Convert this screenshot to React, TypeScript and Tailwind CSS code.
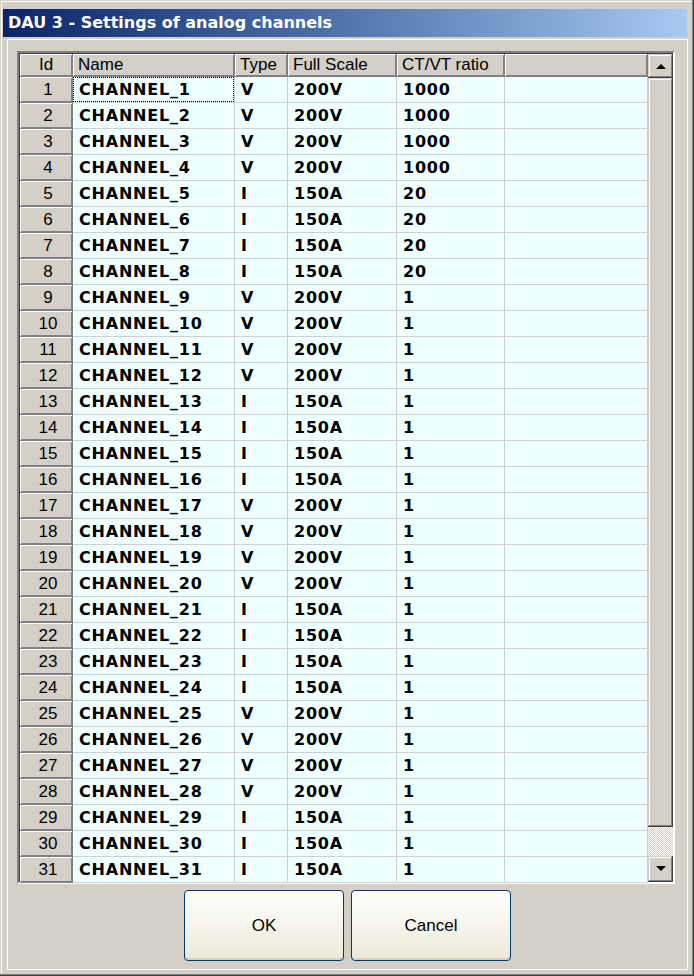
import React from "react";

interface Channel {
  id: number;
  name: string;
  type: string;
  scale: string;
  ratio: string;
}

const CHANNELS: Channel[] = Array.from({ length: 31 }, (_, i) => {
  const n = i + 1;
  const volt = Math.floor(i / 4) % 2 === 0;
  return {
    id: n,
    name: `CHANNEL_${n}`,
    type: volt ? "V" : "I",
    scale: volt ? "200V" : "150A",
    ratio: n <= 4 ? "1000" : n <= 8 ? "20" : "1",
  };
});

const RAISED = "shadow-[inset_1px_1px_0_#ffffff,inset_-1px_-1px_0_#808080]";
const BTN3D =
  "shadow-[inset_-1px_-1px_0_#404040,inset_1px_1px_0_#d4d0c8,inset_-2px_-2px_0_#808080,inset_2px_2px_0_#ffffff]";

function Arrow({ up }: { up?: boolean }) {
  return (
    <svg width="10" height="6" viewBox="0 0 10 6">
      <path d={up ? "M0 6 L5 1 L10 6 Z" : "M0 0 L10 0 L5 5 Z"} fill="#000" />
    </svg>
  );
}

function HeaderCell({ w, label, center }: { w: string; label: string; center?: boolean }) {
  return (
    <div
      className={`${w} h-full flex-shrink-0 flex items-center bg-[#d4d0c8] border-r border-b border-[#808080] ${RAISED} ${
        center ? "justify-center" : "pl-[5px]"
      }`}
    >
      {label}
    </div>
  );
}

function DataCell({ w, children, focus }: { w: string; children?: React.ReactNode; focus?: boolean }) {
  return (
    <div
      className={`${w} relative h-full flex-shrink-0 flex items-center pl-[6px] bg-[#f0ffff] border-r border-b border-[#d0d0d0] font-['DejaVu_Sans',Verdana,sans-serif] font-bold text-[16px] tracking-[0.8px]`}
    >
      {children}
      {focus && <div className="absolute inset-0 border border-dotted border-black" />}
    </div>
  );
}

export default function App() {
  return (
    <div className="w-[694px] h-[976px] bg-[#d4d0c8] pt-[9px] pl-[3px] pr-[7px] pb-[6px] flex flex-col shadow-[inset_-1px_-1px_0_#404040,inset_-2px_-2px_0_#808080,inset_-3px_-3px_0_#d4d0c8,inset_1px_1px_0_#d4d0c8,inset_2px_2px_0_#ffffff] font-['Liberation_Sans',Arial,sans-serif] text-[17px] text-black overflow-hidden">
      {/* Title bar */}
      <div className="h-[28px] flex-shrink-0 flex items-center pl-[5px] bg-gradient-to-r from-[#0a246a] to-[#a6caf0] text-white font-bold text-[16px] font-['DejaVu_Sans',Verdana,sans-serif]">
        DAU 3 - Settings of analog channels
      </div>

      {/* Panel */}
      <div className="mt-[2px] ml-[4px] mr-[-1px] flex-1 border border-white flex flex-col">
        {/* Grid */}
        <div className="mt-[11px] ml-[9px] w-[658px] h-[833px] flex border-2 border-t-[#808080] border-l-[#808080] border-r-white border-b-white">
          <div className="flex-1 flex flex-col border-t border-l border-t-[#404040] border-l-[#404040]">
            <div className="h-[23px] flex flex-shrink-0">
              <HeaderCell w="w-[53px]" label="Id" center />
              <HeaderCell w="w-[162px]" label="Name" />
              <HeaderCell w="w-[53px]" label="Type" />
              <HeaderCell w="w-[109px]" label="Full Scale" />
              <HeaderCell w="w-[108px]" label="CT/VT ratio" />
              <HeaderCell w="w-[143px]" label="" />
            </div>
            {CHANNELS.map((c) => (
              <div key={c.id} className="h-[26px] flex flex-shrink-0">
                <div
                  className={`w-[53px] h-full flex-shrink-0 flex items-center justify-center pl-[4px] bg-[#d4d0c8] border-r border-b border-[#808080] ${RAISED}`}
                >
                  {c.id}
                </div>
                <DataCell w="w-[162px]" focus={c.id === 1}>
                  {c.name}
                </DataCell>
                <DataCell w="w-[53px]">{c.type}</DataCell>
                <DataCell w="w-[109px]">{c.scale}</DataCell>
                <DataCell w="w-[108px]">{c.ratio}</DataCell>
                <DataCell w="w-[143px]" />
              </div>
            ))}
          </div>

          {/* Scrollbar */}
          <div className="w-[25px] flex-shrink-0 flex flex-col border-t border-t-[#404040]">
            <div className={`h-[24px] flex-shrink-0 flex items-center justify-center bg-[#d4d0c8] ${BTN3D}`}>
              <Arrow up />
            </div>
            <div className={`h-[749px] flex-shrink-0 bg-[#d4d0c8] ${BTN3D}`} />
            <div className="flex-1 bg-[repeating-conic-gradient(#ffffff_0%_25%,#d4d0c8_0%_50%)] bg-[length:2px_2px]" />
            <div className={`h-[26px] flex-shrink-0 flex items-center justify-center bg-[#d4d0c8] ${BTN3D}`}>
              <Arrow />
            </div>
          </div>
        </div>

        {/* Buttons */}
        <div className="mt-[6px] flex justify-center gap-[7px]">
          {["OK", "Cancel"].map((label) => (
            <button
              key={label}
              className="w-[160px] h-[71px] rounded-[4px] border border-[#003c74] bg-gradient-to-b from-white to-[#ece9d8] text-[17px] text-black shadow-[inset_0_-2px_0_#d6d0c5]"
            >
              {label}
            </button>
          ))}
        </div>
      </div>
    </div>
  );
}
